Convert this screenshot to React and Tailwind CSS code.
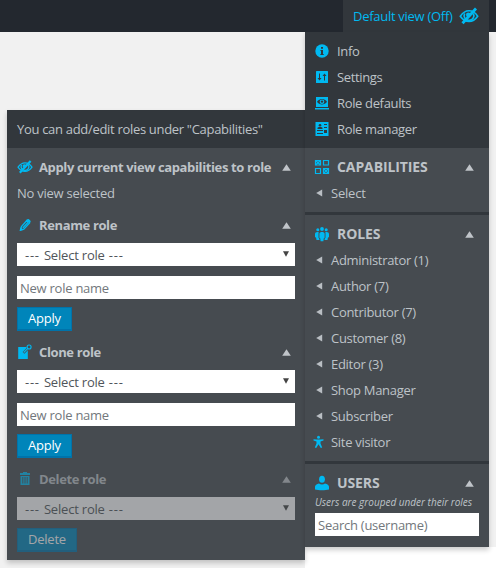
import React from "react";

const EyeOff = ({ s = 20 }) => (
  <svg width={s} height={s} viewBox="0 0 20 20" fill="none" stroke="currentColor" className="block">
    <path d="M1.300 10.200C4 6.400 6.800 4.800 10 4.800s6.200 1.600 8.700 5.400c-2.500 3.600-5.500 5.200-8.700 5.200s-6.200-1.600-8.700-5.200z" strokeWidth="1.600" />
    <path d="M5.700 7.500a4.600 4.600 0 0 0 4.300 6.800A4.600 4.600 0 0 0 14.300 7.500" strokeWidth="1.700" />
    <circle cx="9.300" cy="8.800" r="2.300" fill="currentColor" stroke="none" />
    <path d="M3.500 17.300L17 2.500" strokeWidth="2.800" />
  </svg>
);

const Info = () => (
  <svg width="14" height="14" viewBox="0 0 14 14" fill="#00b9f1" className="block">
    <circle cx="7" cy="7" r="6.700" />
    <path d="M6 3h2v1.700H6zM5.500 6H8v4h.7v1H5.400v-1H6V7h-.5z" fill="#32373c" />
  </svg>
);

const Settings = () => (
  <svg width="14" height="14" viewBox="0 0 14 14" className="block">
    <rect x="1" y="1" width="12" height="12" rx=".5" fill="#00b9f1" />
    <path d="M4.500 3.500v6M9.500 10.500v-6" stroke="#32373c" strokeWidth="1" />
    <path d="M2.500 8h4L4.500 10.500zM7.500 6h4L9.500 3.500z" fill="#32373c" />
  </svg>
);

const Defaults = () => (
  <svg width="14" height="14" viewBox="0 0 14 14" className="block">
    <path d="M1 1h12v10H1zM0 12h14v1.500H0z" fill="#00b9f1" />
    <path d="M2 5.800C4.400 2 9.600 2 12 5.800 9.600 9.500 4.400 9.500 2 5.800z" fill="#32373c" />
    <circle cx="7" cy="5.800" r="2.300" fill="#00b9f1" />
    <circle cx="7" cy="5.600" r="1.200" fill="#32373c" />
  </svg>
);

const Manager = () => (
  <svg width="14" height="14" viewBox="0 0 14 14" className="block">
    <rect x=".5" y="0" width="13" height="14" fill="#00b9f1" />
    <circle cx="5" cy="3.300" r="1.300" fill="#32373c" />
    <path d="M2.500 7V6c0-1.200 5-1.200 5 0v1zM9 2h3v1H9zM9 5h3v1H9zM2 8h6v1H2zM9 8h3v3H9zM2 11h6v1H2z" fill="#32373c" />
  </svg>
);

const Grid = () => (
  <svg width="16" height="16" viewBox="0 0 16 16" fill="none" stroke="#00b9f1" className="block">
    <path d="M1.500 1.500h5v4.500h-5zM9.500 1.500h5v4.500h-5zM1.500 9.500h5v5h-5zM9.500 9.500h5v5h-5z" strokeWidth="1.200" />
    <path d="M1.500 1.500l5 4.500M6.500 1.500l-5 4.500M9.500 9.500l5 5M14.500 9.500l-5 5" strokeWidth="1.400" />
  </svg>
);

const Groups = () => (
  <svg width="16" height="16" viewBox="0 0 16 16" fill="#00b9f1" className="block">
    <circle cx="8" cy="3" r="1.900" />
    <circle cx="3.800" cy="3.700" r="1.500" />
    <circle cx="12.200" cy="3.700" r="1.500" />
    <path d="M5.400 7.600C5.400 5.400 10.600 5.400 10.600 7.600v4.200l-.9.800-.3 2.700h-2.800l-.3-2.700-.9-.8z" />
    <path d="M4.700 6.200C2.300 5.700 1 6.700 1 8.300v2.600l1.100.8.400 2.300h3l-.3-1.600-.7-.7V7.500zM11.300 6.200c2.400-.5 3.700.5 3.700 2.100v2.600l-1.100.8-.4 2.300h-3l.3-1.600.7-.7V7.500z" />
  </svg>
);

const User = () => (
  <svg width="16" height="16" viewBox="0 0 16 16" fill="#00b9f1" className="block">
    <ellipse cx="8" cy="4.200" rx="2.900" ry="3.500" />
    <path d="M1 14.600v-2.800c0-1.700 1.700-3.100 4-3.400 1.700 1.500 4.300 1.500 6 0 2.300.3 4 1.700 4 3.400v2.800c-3.500 1-10.500 1-14 0z" />
  </svg>
);

const Person = () => (
  <svg width="12" height="14" viewBox="0 0 12 14" fill="#00b9f1" className="block">
    <circle cx="5.500" cy="2.300" r="1.500" />
    <path d="M.5 4.300l3.500.3h3l3.500-.3v1.300L7.500 6.500v2L9.200 12.600l-1.400.4L5.500 9.300 3.200 13l-1.400-.4L3.500 8.500v-2L.5 5.600z" />
  </svg>
);

const Pencil = () => (
  <svg width="16" height="16" viewBox="0 0 16 16" fill="none" stroke="#00b9f1" className="block">
    <path d="M10 3.200l2.700 2.600-5.800 6.300-3.500 1.200 1-3.700z" strokeWidth="1.300" strokeLinejoin="round" />
    <path d="M9.500 3l1.300-1c.8-.5 3.300 1.800 2.800 2.700l-1 1.400z" fill="#00b9f1" stroke="none" />
    <path d="M5.800 11l5.500-6" strokeWidth="1.200" />
    <path d="M2.500 13.800l1.200-3.600 2.500 2.400z" fill="#00b9f1" stroke="none" />
  </svg>
);

const Clone = () => (
  <svg width="16" height="16" viewBox="0 0 16 16" fill="#00b9f1" className="block">
    <path d="M1.200 3h8.300v2.500h1.300V15H1.200z" />
    <path d="M6.500 8.800l4-4" stroke="#464b50" strokeWidth="2.500" />
    <path d="M6.700 8.500l4.100-4.100" stroke="#00b9f1" strokeWidth="1.100" />
    <circle cx="12.100" cy="3" r="2" fill="none" stroke="#00b9f1" strokeWidth="1.100" />
  </svg>
);

const Trash = () => (
  <svg width="16" height="16" viewBox="0 0 16 16" fill="#00b9f1" className="block">
    <path d="M6 1h4v1h3v2H3V2h3zM3.500 5h9v9h-9z" />
    <path d="M5.800 6v6.500M8 6v6.500M10.200 6v6.500" stroke="#464b50" strokeWidth=".9" />
  </svg>
);

const Up = () => (
  <svg width="9" height="7" viewBox="0 0 9 7" className="block shrink-0">
    <path d="M4.500 .3L8.800 6.700H.2z" fill="#c0c4c9" />
  </svg>
);

const Left = () => (
  <svg width="7" height="8" viewBox="0 0 7 8" className="mr-[8px] ml-[2px] block shrink-0">
    <path d="M.2 4L6.200 .6v6.800z" fill="#b9bec3" />
  </svg>
);

const MenuItem = ({ icon, children }) => (
  <div className="flex h-[26px] items-center pl-[10px]">
    <span className="mr-[8px]">{icon}</span>
    {children}
  </div>
);

const RoleItem = ({ children }) => (
  <div className="flex h-[26px] items-center pl-[9px]">
    <Left />
    {children}
  </div>
);

const SectionHead = ({ icon, children }) => (
  <div className="flex h-[26px] items-center pr-[15px] pl-[9px] text-[14px] font-bold tracking-[-0.1px]">
    <span className="mr-[7px]">{icon}</span>
    <span className="flex-1">{children}</span>
    <Up />
  </div>
);

const SubHead = ({ icon, children }) => (
  <div className="flex h-[26px] items-center pr-[4px] font-bold tracking-[-0.37px] whitespace-nowrap">
    <span className="mr-[6px] text-[#00b9f1]">{icon}</span>
    <span className="flex-1">{children}</span>
    <Up />
  </div>
);

const Select = () => (
  <div className="flex h-[23px] items-center bg-white pr-[6px] pl-[8px] text-[#50555a]">
    <span className="flex-1">
      <span className="tracking-[0.75px]">--- </span>
      <span className="tracking-[-0.2px]">Select role</span>
      <span className="tracking-[0.75px]"> ---</span>
    </span>
    <svg width="6" height="6" viewBox="0 0 6 6" className="mb-[2px] block">
      <path d="M0 .3h6L3 5.800z" fill="#444" />
    </svg>
  </div>
);

const Field = ({ children }) => (
  <div className="flex h-[23px] items-center bg-white px-[3px] pt-[1px] tracking-[-0.25px] text-[#72777c]">{children}</div>
);

const Button = ({ children }) => (
  <div className="flex h-[24px] w-fit items-center border border-b-2 border-[#0073aa] bg-[#0085ba] px-[10px] pb-[2px] text-white">
    {children}
  </div>
);

export default function App() {
  return (
    <div className="h-[568px] w-[496px] overflow-hidden bg-[linear-gradient(#ffffff,#ffffff)] bg-[length:191px_21px] bg-right-bottom bg-no-repeat font-['Open_Sans','Noto_Sans',sans-serif] text-[13px] leading-[20px] tracking-[-0.22px] text-[#bec3c8] bg-[#f1f1f1]">
      <header className="flex h-[32px] justify-end bg-[#23282f] pr-[7px]">
        <div className="flex w-[146px] items-center justify-between bg-[#32373c] pr-[10px] pl-[10px] tracking-[-0.28px] whitespace-nowrap text-[#00b9f1]">
          <span>Default view (Off)</span>
          <EyeOff s={20} />
        </div>
      </header>
      <div className="flex h-[536px] items-start pl-[7px]">
        <section className="mt-[78px] h-[450px] w-[298px] bg-[#464b50] shadow-[0_3px_5px_rgba(0,0,0,0.2)]">
          <div className="flex h-[38px] items-center bg-[#32373c] pl-[10px] tracking-[-0.31px] whitespace-nowrap">
            You can add/edit roles under "Capabilities"
          </div>
          <div className="px-[10px] pt-[6px]">
            <SubHead icon={<EyeOff s={16} />}>Apply current view capabilities to role</SubHead>
            <div className="flex h-[26px] items-center tracking-[-0.25px]">No view selected</div>
            <div className="mt-[6px]">
              <SubHead icon={<Pencil />}>Rename role</SubHead>
              <div className="mt-[5px] flex flex-col gap-[10px]">
                <Select />
                <Field>New role name</Field>
              </div>
              <div className="mt-[8px]"><Button>Apply</Button></div>
            </div>
            <div className="mt-[8px]">
              <SubHead icon={<Clone />}>Clone role</SubHead>
              <div className="mt-[5px] flex flex-col gap-[10px]">
                <Select />
                <Field>New role name</Field>
              </div>
              <div className="mt-[8px]"><Button>Apply</Button></div>
            </div>
            <div className="mt-[8px] opacity-50">
              <SubHead icon={<Trash />}>Delete role</SubHead>
              <div className="mt-[5px]"><Select /></div>
              <div className="mt-[8px]"><Button>Delete</Button></div>
            </div>
          </div>
        </section>
        <aside className="h-[515px] w-[184px] bg-[#464b50] shadow-[0_3px_5px_rgba(0,0,0,0.2)]">
          <div className="h-[116px] bg-[#32373c] pt-[6px] tracking-[-0.35px]">
            <MenuItem icon={<Info />}>Info</MenuItem>
            <MenuItem icon={<Settings />}>Settings</MenuItem>
            <MenuItem icon={<Defaults />}>Role defaults</MenuItem>
            <MenuItem icon={<Manager />}>Role manager</MenuItem>
          </div>
          <div className="h-[67px] border-b-[3px] border-[#32373c] pt-[6px]">
            <SectionHead icon={<Grid />}>CAPABILITIES</SectionHead>
            <RoleItem>Select</RoleItem>
          </div>
          <div className="h-[249px] border-b-[3px] border-[#32373c] pt-[6px] tracking-[-0.3px]">
            <SectionHead icon={<Groups />}>ROLES</SectionHead>
            <RoleItem>Administrator (1)</RoleItem>
            <RoleItem>Author (7)</RoleItem>
            <RoleItem>Contributor (7)</RoleItem>
            <RoleItem>Customer (8)</RoleItem>
            <RoleItem>Editor (3)</RoleItem>
            <RoleItem>Shop Manager</RoleItem>
            <RoleItem>Subscriber</RoleItem>
            <div className="flex h-[26px] items-center pl-[8px]">
              <span className="mr-[6px]"><Person /></span>
              Site visitor
            </div>
          </div>
          <div className="pt-[6px]">
            <SectionHead icon={<User />}>USERS</SectionHead>
            <div className="h-[17px] pl-[10px] text-[10px] leading-[13px] tracking-[0px] whitespace-nowrap italic">
              Users are grouped under their roles
            </div>
            <div className="mx-[10px]"><Field>Search (username)</Field></div>
          </div>
        </aside>
      </div>
    </div>
  );
}
